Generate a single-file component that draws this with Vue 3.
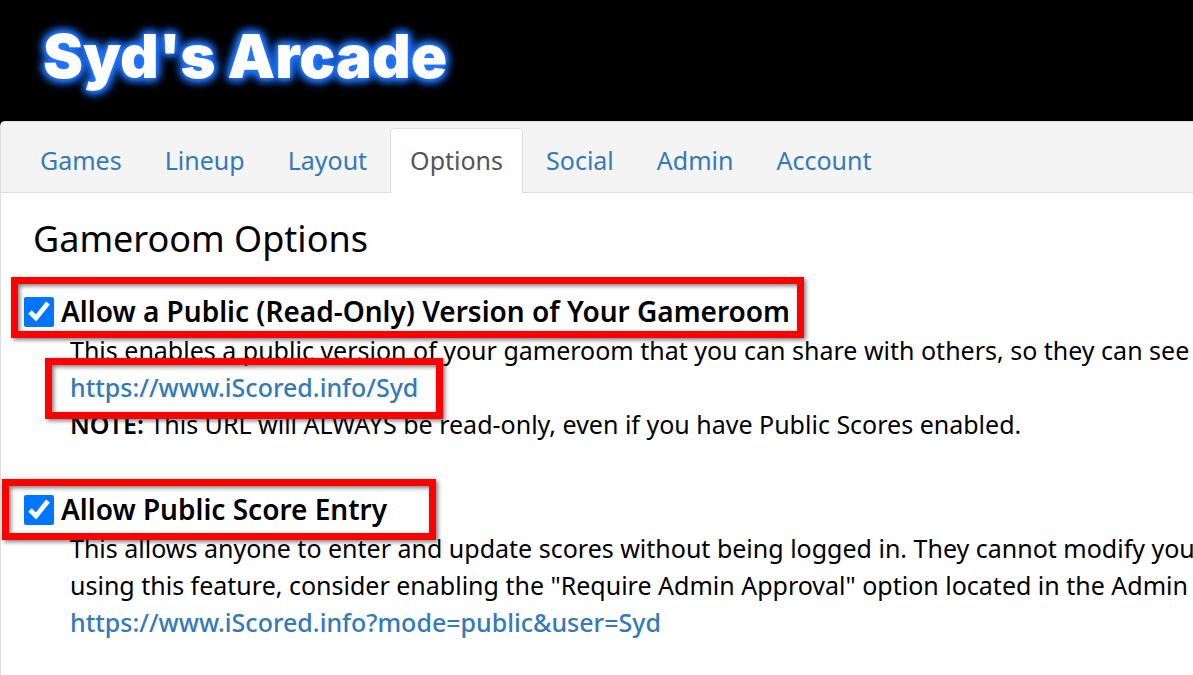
<script setup>
import { ref } from 'vue'

const tabs = ['Games', 'Lineup', 'Layout', 'Options', 'Social', 'Admin', 'Account']
const active = ref('Options')
const publicView = ref(true)
const publicEntry = ref(true)
</script>

<template>
  <div class="page">
    <header class="banner">
      <h1>Syd's Arcade</h1>
    </header>
    <main class="panel">
      <nav class="tabs">
        <a
          v-for="tab in tabs"
          :key="tab"
          href="#"
          :class="['tab', { active: tab === active }]"
          @click.prevent="active = tab"
        >{{ tab }}</a>
      </nav>
      <div class="content">
        <h2>Gameroom Options</h2>

        <section class="option">
          <div class="option-head">
            <input id="public-view" v-model="publicView" type="checkbox">
            <label for="public-view">Allow a Public (Read-Only) Version of Your Gameroom</label>
            <span class="callout callout-view"></span>
          </div>
          <div class="details">
            <p>This enables a public version of your gameroom that you can share with others, so they can see</p>
            <p class="link-line">
              <a href="#" class="url">https://www.iScored.info/Syd</a>
              <span class="callout callout-link"></span>
            </p>
            <p><strong>NOTE:</strong> This URL will ALWAYS be read-only, even if you have Public Scores enabled.</p>
          </div>
        </section>

        <section class="option">
          <div class="option-head">
            <input id="public-entry" v-model="publicEntry" type="checkbox">
            <label for="public-entry">Allow Public Score Entry</label>
            <span class="callout callout-entry"></span>
          </div>
          <div class="details">
            <p>This allows anyone to enter and update scores without being logged in. They cannot modify you</p>
            <p>using this feature, consider enabling the "Require Admin Approval" option located in the Admin</p>
            <p><a href="#" class="url">https://www.iScored.info?mode=public&amp;user=Syd</a></p>
          </div>
        </section>
      </div>
    </main>
  </div>
</template>

<style>
body {
  margin: 0;
  background: #000;
}
</style>

<style scoped>
.page {
  display: flex;
  flex-direction: column;
  min-height: 100vh;
  overflow: hidden;
  background: #000;
  color: #000;
  font-family: "Noto Sans", "Open Sans", sans-serif;
  font-size: 25px;
  line-height: 37px;
}
h1, h2, p {
  margin: 0;
}
a {
  color: #337ab7;
  text-decoration: none;
}
.banner {
  padding: 20px 43px 29px;
}
h1 {
  color: #fff;
  font-family: Inter, sans-serif;
  font-size: 60px;
  font-weight: 900;
  line-height: 72px;
  text-shadow: 0 0 4px #2476ff, 0 0 8px #2476ff, 0 0 10px #2476ff, 0 0 12px #2476ff, 0 0 14px #2476ff;
}
.panel {
  flex: 1;
  border: 1px solid #ddd;
  border-right: 0;
  border-bottom: 0;
  border-radius: 5px 0 0 0;
  background: #fff;
}
.tabs {
  display: flex;
  gap: 3px;
  padding: 6px 19px 0;
  border-bottom: 1px solid #ddd;
  border-radius: 4px 0 0 0;
  background: #f4f4f4;
}
.tab {
  margin-bottom: -1px;
  padding: 13px 19px 14px;
  border: 1px solid transparent;
  border-bottom: 0;
  border-radius: 5px 5px 0 0;
}
.tab.active {
  border-color: #ddd;
  background: #fff;
  color: #555;
}
.content {
  padding: 21px 0 0 32px;
}
h2 {
  font-size: 36px;
  font-weight: 400;
  line-height: 50px;
}
.option {
  margin-top: 27px;
}
.option + .option {
  margin-top: 46px;
}
.option-head {
  position: relative;
  display: flex;
  align-items: center;
  gap: 7px;
  height: 41px;
  margin-left: -9px;
  font-size: 28px;
  font-weight: 600;
  white-space: nowrap;
}
input[type="checkbox"] {
  flex: none;
  width: 30px;
  height: 30px;
  margin: 0;
  accent-color: #0075ff;
}
.details {
  padding-left: 37px;
  white-space: nowrap;
}
.link-line {
  position: relative;
}
.url {
  font-weight: 550;
}
strong {
  font-weight: 600;
}
.callout {
  position: absolute;
  box-sizing: border-box;
  height: 61px;
  border: 7px solid #f00;
  filter: drop-shadow(2px 2px 2px rgba(0, 0, 0, 0.5));
  pointer-events: none;
}
.callout-view {
  top: -14px;
  left: -13px;
  width: 793px;
}
.callout-link {
  top: -11px;
  left: -25px;
  width: 398px;
}
.callout-entry {
  top: -10px;
  left: -22px;
  width: 434px;
}
</style>
